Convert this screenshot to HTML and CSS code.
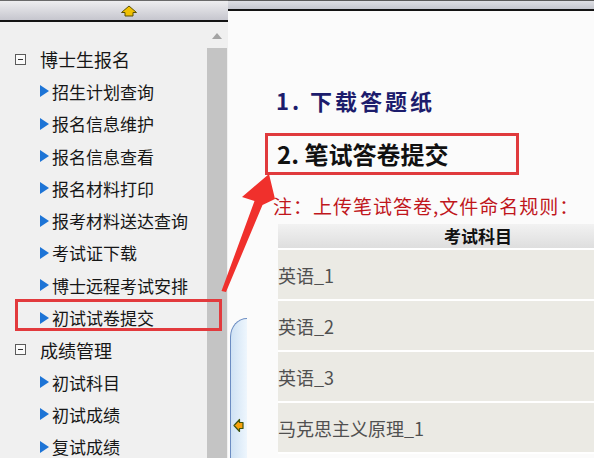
FILE: index.html
```html
<!DOCTYPE html>
<html lang="zh-CN">
<head>
<meta charset="utf-8">
<title>博士生报名</title>
<link rel="stylesheet" href="styles.css">
</head>
<body>
<div class="app">
  <aside class="sidebar">
    <div class="side-top">
      <svg class="up-icon" width="18" height="12" viewBox="0 0 18 12"><path d="M9 1 L16.5 7.5 L13 7.5 L13 11 L5 11 L5 7.5 L1.5 7.5 Z" fill="#f0c000" stroke="#5c5000" stroke-width="1" stroke-linejoin="round"/></svg>
    </div>
    <div class="side-body">
      <ul class="menu">
        <li class="group"><span class="minus"></span>博士生报名</li>
        <li class="item"><span class="tri"></span>招生计划查询</li>
        <li class="item"><span class="tri"></span>报名信息维护</li>
        <li class="item"><span class="tri"></span>报名信息查看</li>
        <li class="item"><span class="tri"></span>报名材料打印</li>
        <li class="item"><span class="tri"></span>报考材料送达查询</li>
        <li class="item"><span class="tri"></span>考试证下载</li>
        <li class="item"><span class="tri"></span>博士远程考试安排</li>
        <li class="item"><span class="tri"></span>初试试卷提交</li>
        <li class="group"><span class="minus"></span>成绩管理</li>
        <li class="item"><span class="tri"></span>初试科目</li>
        <li class="item"><span class="tri"></span>初试成绩</li>
        <li class="item"><span class="tri"></span>复试成绩</li>
      </ul>
      <div class="scrollbar">
        <div class="sb-up"><span class="sb-arrow"></span></div>
        <div class="sb-track"></div>
      </div>
    </div>
    <div class="hl-box"></div>
  </aside>
  <main class="main">
    <div class="main-top"></div>
    <div class="main-body">
      <div class="gutter">
        <div class="splitter">
          <svg class="left-icon" width="11" height="15" viewBox="0 0 11 15"><path d="M1 7.5 L6.5 1.5 L6.5 4.5 L10 4.5 L10 10.5 L6.5 10.5 L6.5 13.5 Z" fill="#f7a10a" stroke="#3f5410" stroke-width="1.2" stroke-linejoin="round"/></svg>
        </div>
      </div>
      <div class="content">
        <h2 class="step1">1. 下载答题纸</h2>
        <div class="step2">2. 笔试答卷提交</div>
        <p class="note">注：上传笔试答卷,文件命名规则：</p>
        <table class="subjects">
          <thead><tr><th>考试科目</th></tr></thead>
          <tbody>
            <tr><td>英语_1</td></tr>
            <tr><td>英语_2</td></tr>
            <tr><td>英语_3</td></tr>
            <tr><td>马克思主义原理_1</td></tr>
          </tbody>
        </table>
      </div>
    </div>
  </main>
</div>
<svg class="arrow-overlay" width="594" height="458" viewBox="0 0 594 458">
  <path d="M269 174 L275 199 L262.5 205 L226 292 L221.5 291 L254.5 201 L242 197 Z" fill="#f0302c"/>
</svg>
</body>
</html>
```

FILE: styles.css
```css
html, body {
  margin: 0;
  padding: 0;
}
body {
  position: relative;
  width: 594px;
  height: 458px;
  overflow: hidden;
  font-family: "Noto Sans CJK SC", "Noto Sans", sans-serif;
  background: #fbfbfb;
}
.app {
  display: flex;
  height: 458px;
}

/* sidebar */
.sidebar {
  position: relative;
  width: 228px;
  flex: none;
  display: flex;
  flex-direction: column;
}
.side-top {
  height: 22px;
  box-sizing: border-box;
  border-top: 1px solid #6a6a6a;
  border-bottom: 2px solid #141414;
  background: linear-gradient(#eeeef0, #c6c6ce);
  display: flex;
  align-items: center;
  justify-content: center;
  padding-left: 30px;
}
.up-icon {
  display: block;
}
.side-body {
  flex: 1;
  display: flex;
  min-height: 0;
  background: #f0f0f0;
}
.menu {
  flex: 1;
  list-style: none;
  margin: 0;
  padding: 21px 0 0 0;
  min-width: 0;
}
.menu li {
  height: 32.3px;
  display: flex;
  align-items: center;
  white-space: nowrap;
  color: #161616;
}
.group {
  padding-left: 15px;
  font-size: 18px;
}
.minus {
  position: relative;
  width: 11px;
  height: 11px;
  box-sizing: border-box;
  border: 1px solid #5a5a5a;
  margin-right: 14px;
  background: #fafafa;
}
.minus::after {
  content: "";
  position: absolute;
  left: 2px;
  right: 2px;
  top: 4px;
  height: 1px;
  background: #333;
}
.item {
  padding-left: 40px;
  font-size: 17px;
}
.tri {
  width: 0;
  height: 0;
  border-left: 9px solid #1d74d6;
  border-top: 6px solid transparent;
  border-bottom: 6px solid transparent;
  margin-right: 3px;
}
.scrollbar {
  width: 20px;
  flex: none;
  display: flex;
  flex-direction: column;
  margin-right: 1px;
}
.sb-up {
  height: 26px;
  display: flex;
  justify-content: center;
  padding-top: 11px;
  box-sizing: border-box;
}
.sb-arrow {
  width: 0;
  height: 0;
  border-bottom: 6px solid #a4a4a4;
  border-left: 5px solid transparent;
  border-right: 5px solid transparent;
}
.sb-track {
  flex: 1;
  background: #c4c4c4;
}
.hl-box {
  position: absolute;
  left: 15px;
  top: 299px;
  width: 207px;
  height: 32px;
  box-sizing: border-box;
  border: 3px solid #e23a3d;
}

/* main */
.main {
  flex: 1;
  min-width: 0;
  display: flex;
  flex-direction: column;
  overflow: hidden;
  background: #fbfbfb;
}
.main-top {
  height: 11px;
  flex: none;
  box-sizing: border-box;
  border-top: 1px solid #5a5a5a;
  border-bottom: 2px solid #141414;
  background: linear-gradient(#dedfe4, #c4c6ce);
}
.main-body {
  flex: 1;
  display: flex;
  min-height: 0;
}
.gutter {
  width: 19px;
  flex: none;
  display: flex;
  flex-direction: column;
}
.splitter {
  margin-top: auto;
  margin-left: 2px;
  height: 140px;
  box-sizing: border-box;
  border-left: 1.5px solid #6b8cc2;
  border-top: 1.5px solid #6b8cc2;
  border-top-left-radius: 17px 19px;
  background: linear-gradient(to right, #cfe2f4, #eef6fd);
  padding: 99px 0 0 2px;
}
.left-icon {
  display: block;
}
.content {
  flex: 1;
  min-width: 0;
}
.step1 {
  margin: 76px 0 0 29px;
  font-size: 22px;
  line-height: 26px;
  font-weight: bold;
  color: #1c1c6c;
  letter-spacing: 3px;
  white-space: nowrap;
}
.step2 {
  margin: 20px 0 0 18px;
  width: 254px;
  height: 42px;
  box-sizing: border-box;
  border: 3px solid #e03a3d;
  padding-left: 9px;
  font-size: 24px;
  line-height: 36px;
  font-weight: bold;
  color: #111;
  white-space: nowrap;
}
.note {
  margin: 20px 0 0 26px;
  font-size: 19px;
  line-height: 22px;
  letter-spacing: 1px;
  color: #c0161c;
  white-space: nowrap;
}
.subjects {
  margin: 7px 0 0 31px;
  width: 400px;
  border-collapse: separate;
  border-spacing: 0;
}
.subjects th {
  height: 24px;
  padding: 0;
  border-bottom: 2px solid #ffffff;
  background: linear-gradient(#f2f2f2, #dedede);
  font-size: 17px;
  font-weight: bold;
  color: #111;
  text-align: center;
  line-height: 24px;
}
.subjects td {
  height: 49px;
  padding: 0;
  border-bottom: 2px solid #ffffff;
  background: #ebeae4;
  font-size: 18px;
  color: #505050;
  text-align: left;
  line-height: 24px;
}

.arrow-overlay {
  position: absolute;
  left: 0;
  top: 0;
  pointer-events: none;
}
```
